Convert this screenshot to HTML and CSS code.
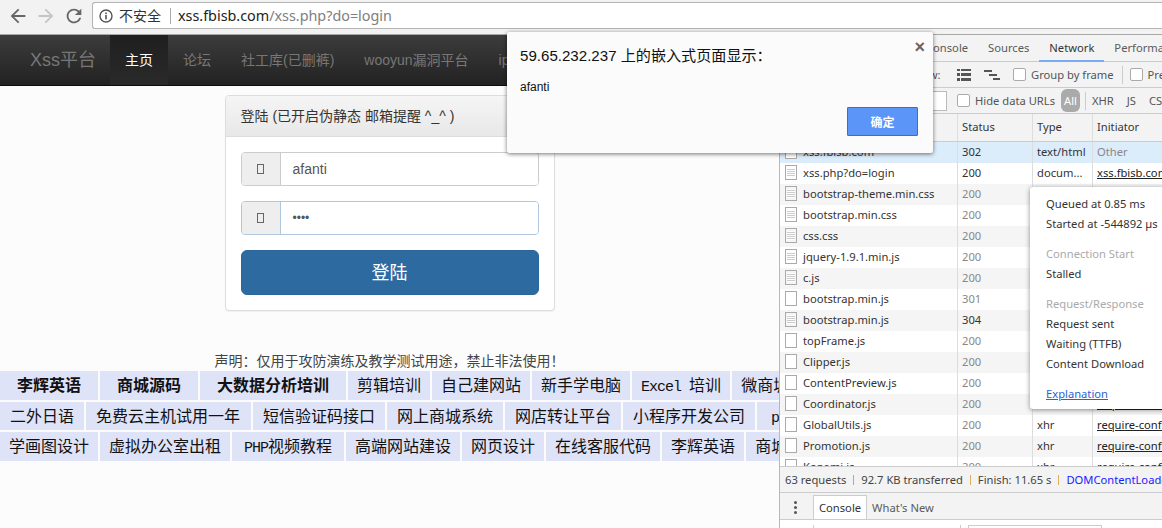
FILE: index.html
```html
<!DOCTYPE html>
<html lang="zh-CN">
<head>
    <meta charset="UTF-8">
    <title>Xss平台</title>
    <link rel="stylesheet" href="styles.css">
</head>
<body>
    <!-- Browser toolbar -->
    <div class="chrome-bar">
        <svg class="nav-icon" viewBox="0 0 24 24"><path fill="#666" d="M20 11H7.83l5.59-5.59L12 4l-8 8 8 8 1.41-1.41L7.83 13H20v-2z"/></svg>
        <svg class="nav-icon" viewBox="0 0 24 24"><path fill="#c4c4c4" d="M12 4l-1.41 1.41L16.17 11H4v2h12.17l-5.58 5.59L12 20l8-8z"/></svg>
        <svg class="nav-icon" viewBox="0 0 24 24"><path fill="#666" d="M17.65 6.35C16.2 4.9 14.21 4 12 4c-4.42 0-7.99 3.58-7.99 8s3.57 8 7.99 8c3.73 0 6.84-2.55 7.73-6h-2.08c-.82 2.33-3.04 4-5.65 4-3.31 0-6-2.69-6-6s2.69-6 6-6c1.66 0 3.14.69 4.22 1.78L13 11h7V4l-2.35 2.35z"/></svg>
        <div class="omnibox">
            <svg class="info-icon" viewBox="0 0 14 14">
                <circle cx="7" cy="7" r="6" fill="none" stroke="#555" stroke-width="1.4"/>
                <rect x="6.2" y="6" width="1.6" height="4.4" fill="#555"/>
                <rect x="6.2" y="3.5" width="1.6" height="1.6" fill="#555"/>
            </svg>
            <span class="not-secure">不安全</span>
            <span class="url"><b>xss.fbisb.com</b>/xss.php?do=login</span>
        </div>
    </div>

    <div class="workspace">
        <!-- The page itself -->
        <div class="page">
            <div class="navbar">
                <a class="brand">Xss平台</a>
                <a class="nav-item active">主页</a>
                <a class="nav-item">论坛</a>
                <a class="nav-item">社工库(已删裤)</a>
                <a class="nav-item">wooyun漏洞平台</a>
                <a class="nav-item">ip</a>
            </div>

            <div class="panel">
                <div class="panel-head">登陆 (已开启伪静态 邮箱提醒 ^_^ )</div>
                <div class="panel-body">
                    <div class="input-group">
                        <span class="addon"><i class="tofu"></i></span>
                        <span class="field">afanti</span>
                    </div>
                    <div class="input-group focused">
                        <span class="addon"><i class="tofu"></i></span>
                        <span class="field dots">••••</span>
                    </div>
                    <button class="login-btn">登陆</button>
                </div>
            </div>

            <p class="notice">声明：仅用于攻防演练及教学测试用途，禁止非法使用！</p>

            <div class="ads">
                <div class="ad-row row-a">
                    <a class="strong">李辉英语</a>
                    <a class="strong">商城源码</a>
                    <a class="strong">大数据分析培训</a>
                    <a>剪辑培训</a>
                    <a>自己建网站</a>
                    <a>新手学电脑</a>
                    <a><span class="latin">Excel </span>培训</a>
                    <a>微商城开发</a>
                </div>
                <div class="ad-row row-b">
                    <a>二外日语</a>
                    <a>免费云主机试用一年</a>
                    <a>短信验证码接口</a>
                    <a>网上商城系统</a>
                    <a>网店转让平台</a>
                    <a>小程序开发公司</a>
                    <a class="wide"><span class="latin">php</span>培训</a>
                </div>
                <div class="ad-row row-c">
                    <a>学画图设计</a>
                    <a>虚拟办公室出租</a>
                    <a class="wide"><span class="latin">PHP</span>视频教程</a>
                    <a>高端网站建设</a>
                    <a>网页设计</a>
                    <a>在线客服代码</a>
                    <a>李辉英语</a>
                    <a>商城源码</a>
                </div>
            </div>
        </div>

        <!-- DevTools -->
        <div class="devtools">
            <div class="dt-tabs">
                <span>Console</span>
                <span>Sources</span>
                <span class="current">Network</span>
                <span>Performance</span>
            </div>
            <div class="dt-bar view-bar">
                <span class="view-label">View:</span>
                <svg class="view-icon" viewBox="0 0 14 12"><path fill="#555" d="M0 0h3v2H0zM4 0h10v2H4zM0 4h3v3H0zM4 4h10v3H4zM0 9h3v3H0zM4 9h10v3H4z"/></svg>
                <svg class="view-icon waterfall" viewBox="0 0 16 12"><path fill="#555" d="M0 1h8v2H0zM5 5h8v2H5zM9 9h7v2H9z"/></svg>
                <i class="check"></i>
                <span>Group by frame</span>
                <i class="bar-sep"></i>
                <i class="check"></i>
                <span>Preserve log</span>
            </div>
            <div class="dt-bar filter-bar">
                <i class="filter-input"></i>
                <i class="check"></i>
                <span>Hide data URLs</span>
                <b class="all-badge">All</b>
                <i class="bar-sep"></i>
                <span class="filter-type">XHR</span>
                <span class="filter-type">JS</span>
                <span class="filter-type">CSS</span>
            </div>
            <div class="net-head net-grid">
                <span>Name</span>
                <span>Status</span>
                <span>Type</span>
                <span>Initiator</span>
            </div>
            <div class="net-list">
                <div class="net-row net-grid selected">
                    <span><i class="file"></i>xss.fbisb.com</span><span>302</span><span>text/html</span><span class="muted">Other</span>
                </div>
                <div class="net-row net-grid">
                    <span><i class="file doc"></i>xss.php?do=login</span><span>200</span><span>docum...</span><span class="link">xss.fbisb.com</span>
                </div>
                <div class="net-row net-grid">
                    <span><i class="file doc"></i>bootstrap-theme.min.css</span><span class="muted">200</span><span>stylesh...</span><span class="link">xss.php</span>
                </div>
                <div class="net-row net-grid">
                    <span><i class="file doc"></i>bootstrap.min.css</span><span class="muted">200</span><span>stylesh...</span><span class="link">xss.php</span>
                </div>
                <div class="net-row net-grid">
                    <span><i class="file doc"></i>css.css</span><span class="muted">200</span><span>stylesh...</span><span class="link">xss.php</span>
                </div>
                <div class="net-row net-grid">
                    <span><i class="file doc"></i>jquery-1.9.1.min.js</span><span class="muted">200</span><span>script</span><span class="link">xss.php</span>
                </div>
                <div class="net-row net-grid">
                    <span><i class="file doc"></i>c.js</span><span class="muted">200</span><span>script</span><span class="link">xss.php</span>
                </div>
                <div class="net-row net-grid">
                    <span><i class="file"></i>bootstrap.min.js</span><span class="muted">301</span><span>script</span><span class="link">xss.php</span>
                </div>
                <div class="net-row net-grid">
                    <span><i class="file doc"></i>bootstrap.min.js</span><span>304</span><span>script</span><span class="link">xss.php</span>
                </div>
                <div class="net-row net-grid">
                    <span><i class="file"></i>topFrame.js</span><span class="muted">200</span><span>xhr</span><span class="link">require-config</span>
                </div>
                <div class="net-row net-grid">
                    <span><i class="file"></i>Clipper.js</span><span class="muted">200</span><span>xhr</span><span class="link">require-config</span>
                </div>
                <div class="net-row net-grid">
                    <span><i class="file"></i>ContentPreview.js</span><span class="muted">200</span><span>xhr</span><span class="link">require-config</span>
                </div>
                <div class="net-row net-grid">
                    <span><i class="file"></i>Coordinator.js</span><span class="muted">200</span><span>xhr</span><span class="link">require-config</span>
                </div>
                <div class="net-row net-grid">
                    <span><i class="file"></i>GlobalUtils.js</span><span class="muted">200</span><span>xhr</span><span class="link">require-config</span>
                </div>
                <div class="net-row net-grid">
                    <span><i class="file"></i>Promotion.js</span><span class="muted">200</span><span>xhr</span><span class="link">require-config</span>
                </div>
                <div class="net-row net-grid">
                    <span><i class="file"></i>Konami.js</span><span class="muted">200</span><span>xhr</span><span class="link">require-config</span>
                </div>
            </div>
            <div class="net-summary">
                <span>63 requests</span><i></i>
                <span>92.7 KB transferred</span><i class="amber"></i>
                <span>Finish: 11.65 s</span><i class="amber"></i>
                <span class="blue">DOMContentLoaded: 2.10 s</span>
            </div>
            <div class="drawer-tabs">
                <span class="dots-menu"></span>
                <span class="drawer-tab current">Console</span>
                <span class="drawer-tab">What's New</span>
            </div>
            <div class="drawer-body">
                <i class="drawer-sep"></i>
                <i class="drawer-sep second"></i>
                <i class="drawer-filter"></i>
            </div>
        </div>
    </div>

    <!-- Timing popover over the network table -->
    <div class="timing">
        <p>Queued at 0.85 ms</p>
        <p>Started at -544892 µs</p>
        <p class="heading">Connection Start</p>
        <p>Stalled</p>
        <p class="heading">Request/Response</p>
        <p>Request sent</p>
        <p>Waiting (TTFB)</p>
        <p>Content Download</p>
        <a class="explain">Explanation</a>
    </div>

    <!-- JS alert -->
    <div class="dialog">
        <span class="dialog-close">×</span>
        <div class="dialog-title">59.65.232.237 上的嵌入式页面显示：</div>
        <div class="dialog-text">afanti</div>
        <div class="dialog-actions"><button class="dialog-ok">确定</button></div>
    </div>
</body>
</html>
```

FILE: styles.css
```css
html, body {
    margin: 0;
    height: 100%;
    overflow: hidden;
}

body {
    font-family: 'Liberation Sans', 'Noto Sans CJK SC', sans-serif;
    background-color: #fff;
    color: #333;
}

p {
    margin: 0;
}

/* Browser toolbar */
.chrome-bar {
    height: 35px;
    box-sizing: border-box;
    display: flex;
    align-items: flex-start;
    padding: 2px 0 0 7px;
    background-color: #f2f2f2;
    border-bottom: 1px solid #a8a8a8;
}

.nav-icon {
    width: 22px;
    height: 22px;
    margin: 3px 6px 0 0;
}

.omnibox {
    flex: 1;
    height: 27px;
    margin-left: 1px;
    box-sizing: border-box;
    display: flex;
    align-items: center;
    background-color: #fff;
    border: 1px solid #b4b4b4;
    border-right: none;
    border-radius: 3px 0 0 3px;
    padding-left: 6px;
}

.info-icon {
    width: 14px;
    height: 14px;
    margin-right: 6px;
}

.not-secure {
    font-size: 14px;
    color: #333;
    padding-right: 9px;
    margin-right: 7px;
    border-right: 1px solid #aaa;
    line-height: 16px;
}

.url {
    font-family: 'Noto Sans', sans-serif;
    font-size: 14.35px;
    color: #808080;
    padding-bottom: 1px;
}

.url b {
    font-weight: normal;
    color: #222;
}

.workspace {
    display: flex;
    height: 493px;
}

/* Page */
.page {
    width: 779px;
    flex: none;
    background-color: #fcfcfc;
    overflow: hidden;
}

.navbar {
    height: 51px;
    display: flex;
    align-items: stretch;
    padding-left: 15px;
    background: linear-gradient(to bottom, #3c3c3c, #222);
    border-bottom: 1px solid #0c0c0c;
    box-sizing: border-box;
    white-space: nowrap;
}

.brand {
    font-size: 18px;
    line-height: 50px;
    padding: 0 14px 0 15px;
    color: #777;
}

.nav-item {
    font-size: 14px;
    line-height: 50px;
    padding: 0 15px;
    color: #777;
}

.nav-item.active {
    color: #fff;
    background: linear-gradient(to bottom, #1f1f1f, #2a2a2a);
}

.panel {
    width: 328px;
    margin: 9px auto 0;
    background-color: #fff;
    border: 1px solid #ddd;
    border-radius: 4px;
    box-shadow: 0 1px 1px rgba(0, 0, 0, 0.05);
}

.panel-head {
    height: 40px;
    line-height: 40px;
    padding: 0 15px;
    font-size: 14px;
    background: linear-gradient(to bottom, #f5f5f5, #e8e8e8);
    border-bottom: 1px solid #ddd;
    border-radius: 3px 3px 0 0;
}

.panel-body {
    padding: 15px;
}

.input-group {
    display: flex;
    height: 34px;
    margin-bottom: 15px;
    box-sizing: border-box;
    border: 1px solid #ccc;
    border-radius: 4px;
}

.input-group.focused {
    border-color: #afc6de;
}

.addon {
    width: 38px;
    display: flex;
    justify-content: center;
    align-items: center;
    background-color: #eee;
    border-right: 1px solid #ccc;
    border-radius: 3px 0 0 3px;
}

.focused .addon {
    border-right-color: #afc6de;
}

.tofu {
    width: 5px;
    height: 8px;
    border: 1px solid #666;
}

.field {
    flex: 1;
    padding-left: 12px;
    font-size: 14px;
    line-height: 32px;
    color: #555;
    background-color: #fff;
    border-radius: 0 3px 3px 0;
}

.field.dots {
    font-size: 12px;
}

.login-btn {
    display: block;
    width: 100%;
    height: 45px;
    padding: 0 0 4px;
    font-family: inherit;
    font-size: 18px;
    color: #fff;
    background-color: #2c6aa0;
    border: 1px solid #2b669a;
    border-radius: 6px;
}

.notice {
    margin-top: 41px;
    height: 19px;
    line-height: 19px;
    text-align: center;
    font-size: 14px;
    color: #444;
}

/* Link rows */
.ads {
    font-family: 'Noto Sans CJK SC', sans-serif;
    font-size: 16px;
    color: #111;
    white-space: nowrap;
}

.ad-row {
    display: flex;
    gap: 2px;
    margin-bottom: 2px;
}

.ad-row a {
    flex: none;
    height: 29px;
    line-height: 27px;
    padding: 0 9px;
    background-color: #dfe3f8;
}

.row-b a {
    height: 28px;
    line-height: 26px;
    padding: 0 10px;
}

.row-b a:nth-child(2) {
    padding-right: 11px;
}

.ad-row a.strong {
    padding: 0 17px;
    font-weight: bold;
}

.ad-row a.wide {
    padding: 0 12px;
}

.row-b a.wide {
    padding: 0 14px;
}

.latin {
    font-family: 'Liberation Mono', monospace;
    font-size: 15px;
    letter-spacing: -1px;
}

/* DevTools */
.devtools {
    flex: 1;
    min-width: 0;
    display: flex;
    flex-direction: column;
    border-left: 1px solid #b8b8b8;
    background-color: #fff;
    font-family: 'Noto Sans', sans-serif;
    font-size: 11.2px;
    color: #333;
    white-space: nowrap;
    overflow: hidden;
}

.dt-tabs {
    height: 27px;
    box-sizing: border-box;
    display: flex;
    padding-left: 136px;
    background-color: #f3f3f3;
    border-bottom: 1px solid #ccc;
    line-height: 26px;
    color: #5a5a5a;
}

.dt-tabs span {
    padding: 0 10px;
}

.dt-tabs .current {
    color: #333;
    border-bottom: 2px solid #7baaf7;
    height: 25px;
}

.dt-bar {
    display: flex;
    align-items: center;
    box-sizing: border-box;
    background-color: #f3f3f3;
    border-bottom: 1px solid #ccc;
    color: #555;
}

.view-bar {
    height: 26px;
    padding-left: 133px;
}

.filter-bar {
    height: 26px;
}

.view-label {
    width: 44px;
    flex: none;
}

.view-icon {
    width: 14px;
    height: 12px;
    margin-right: 13px;
    flex: none;
}

.view-icon.waterfall {
    width: 16px;
}

.check {
    width: 11px;
    height: 11px;
    margin-right: 5px;
    border: 1px solid #aaa;
    border-radius: 2px;
    background-color: #fff;
    flex: none;
}

.bar-sep {
    width: 1px;
    height: 18px;
    margin: 0 6px 0 8px;
    background-color: #ccc;
    flex: none;
}

.view-bar .bar-sep {
    margin: 0 7px 0 8px;
}

.filter-input {
    width: 167px;
    height: 20px;
    box-sizing: border-box;
    margin-right: 10px;
    background-color: #fff;
    border: 1px solid #bbb;
    flex: none;
}

.all-badge {
    margin-left: 6px;
    padding: 4px 3px;
    font-weight: normal;
    color: #fff;
    background-color: #aaa;
    border-radius: 6px;
}

.filter-bar .bar-sep {
    margin-left: 5px;
}

.filter-type {
    margin-right: 13px;
}

.net-grid {
    display: grid;
    grid-template-columns: 177px 75px 60px 1fr;
}

.net-grid > span {
    padding-left: 5px;
    overflow: hidden;
    box-sizing: border-box;
}

.net-grid > span + span {
    padding-left: 4px;
    border-left: 1px solid #ddd;
}

.net-head {
    height: 27px;
    line-height: 26px;
    flex: none;
    background-color: #f3f3f3;
    border-bottom: 1px solid #ccc;
}

.net-list {
    flex: 1;
    min-height: 0;
    overflow: hidden;
    background-color: #fff;
}

.net-row {
    height: 21px;
    line-height: 20px;
}

.net-row:nth-child(odd) {
    background-color: #f5f5f5;
}

.net-row.selected {
    background-color: #dbecfb;
}

.net-row .muted {
    color: #888;
}

.net-row .link {
    color: #222;
    text-decoration: underline;
}

.file {
    display: inline-block;
    width: 10px;
    height: 13px;
    margin: 0 6px 0 0;
    vertical-align: -3px;
    background-color: #fff;
    border: 1px solid #aaa;
}

.file.doc {
    background: repeating-linear-gradient(to bottom, #fff 0, #fff 1px, #ccc 1px, #ccc 2px);
    background-clip: content-box;
    padding: 2px 1px;
    width: 8px;
    height: 9px;
}

.net-summary {
    height: 27px;
    flex: none;
    box-sizing: border-box;
    display: flex;
    align-items: center;
    padding-left: 5px;
    background-color: #f3f3f3;
    border-top: 1px solid #ccc;
    border-bottom: 1px solid #ccc;
    color: #444;
}

.net-summary i {
    width: 1px;
    height: 10px;
    margin: 0 7px;
    background-color: #aaa;
    flex: none;
}

.net-summary i.amber {
    background-color: #e0b060;
}

.net-summary .blue {
    color: #1a1aff;
}

.drawer-tabs {
    height: 27px;
    flex: none;
    box-sizing: border-box;
    display: flex;
    align-items: flex-end;
    padding-left: 33px;
    position: relative;
    background-color: #f3f3f3;
    border-bottom: 1px solid #ccc;
    color: #5a5a5a;
}

.dots-menu {
    position: absolute;
    left: 14px;
    top: 8px;
    width: 3px;
    height: 3px;
    border-radius: 50%;
    background-color: #555;
    box-shadow: 0 5px 0 #555, 0 10px 0 #555;
}

.drawer-tab {
    height: 23px;
    line-height: 24px;
    padding: 0 5px;
}

.drawer-tab.current {
    color: #333;
    background-color: #fff;
    border: 1px solid #ccc;
    border-bottom: none;
}

.drawer-body {
    flex: none;
    height: 8px;
    display: flex;
    padding: 5px 0 0 33px;
    box-sizing: border-box;
}

.drawer-sep {
    width: 1px;
    background-color: #ccc;
}

.drawer-sep.second {
    margin-left: 146px;
}

.drawer-filter {
    width: 134px;
    margin-left: 7px;
    box-sizing: border-box;
    border: 1px solid #ccc;
    border-bottom: none;
}

/* Overlays */
.timing {
    position: absolute;
    left: 1030px;
    top: 187px;
    width: 140px;
    height: 222px;
    box-sizing: border-box;
    padding: 7px 0 0 16px;
    background-color: #fff;
    border-radius: 3px 0 0 3px;
    box-shadow: 0 1px 5px rgba(0, 0, 0, 0.45);
    font-family: 'Noto Sans', sans-serif;
    font-size: 11.2px;
    line-height: 20px;
    color: #333;
    white-space: nowrap;
}

.timing .heading {
    margin-top: 10px;
    color: #aaa;
}

.explain {
    display: block;
    margin-top: 10px;
    color: #2a62d2;
    text-decoration: underline;
}

.dialog {
    position: absolute;
    left: 507px;
    top: 32px;
    width: 426px;
    height: 121px;
    box-sizing: border-box;
    padding: 15px 15px 0 13px;
    background-color: #fbfbfb;
    border-radius: 2px;
    box-shadow: 0 1px 4px rgba(0, 0, 0, 0.55);
}

.dialog-close {
    position: absolute;
    right: 8px;
    top: 5px;
    font-size: 18px;
    font-weight: bold;
    color: #666;
}

.dialog-title {
    font-size: 15.1px;
    line-height: 18px;
    color: #111;
}

.dialog-text {
    margin-top: 14px;
    font-size: 12px;
    line-height: 16px;
    color: #111;
}

.dialog-actions {
    margin-top: 12px;
    display: flex;
    justify-content: flex-end;
}

.dialog-ok {
    width: 71px;
    height: 29px;
    font-family: inherit;
    font-size: 12px;
    font-weight: bold;
    color: #fff;
    background-color: #5a95f7;
    border: 1px solid #3a6fc8;
    border-radius: 1px;
}
```
